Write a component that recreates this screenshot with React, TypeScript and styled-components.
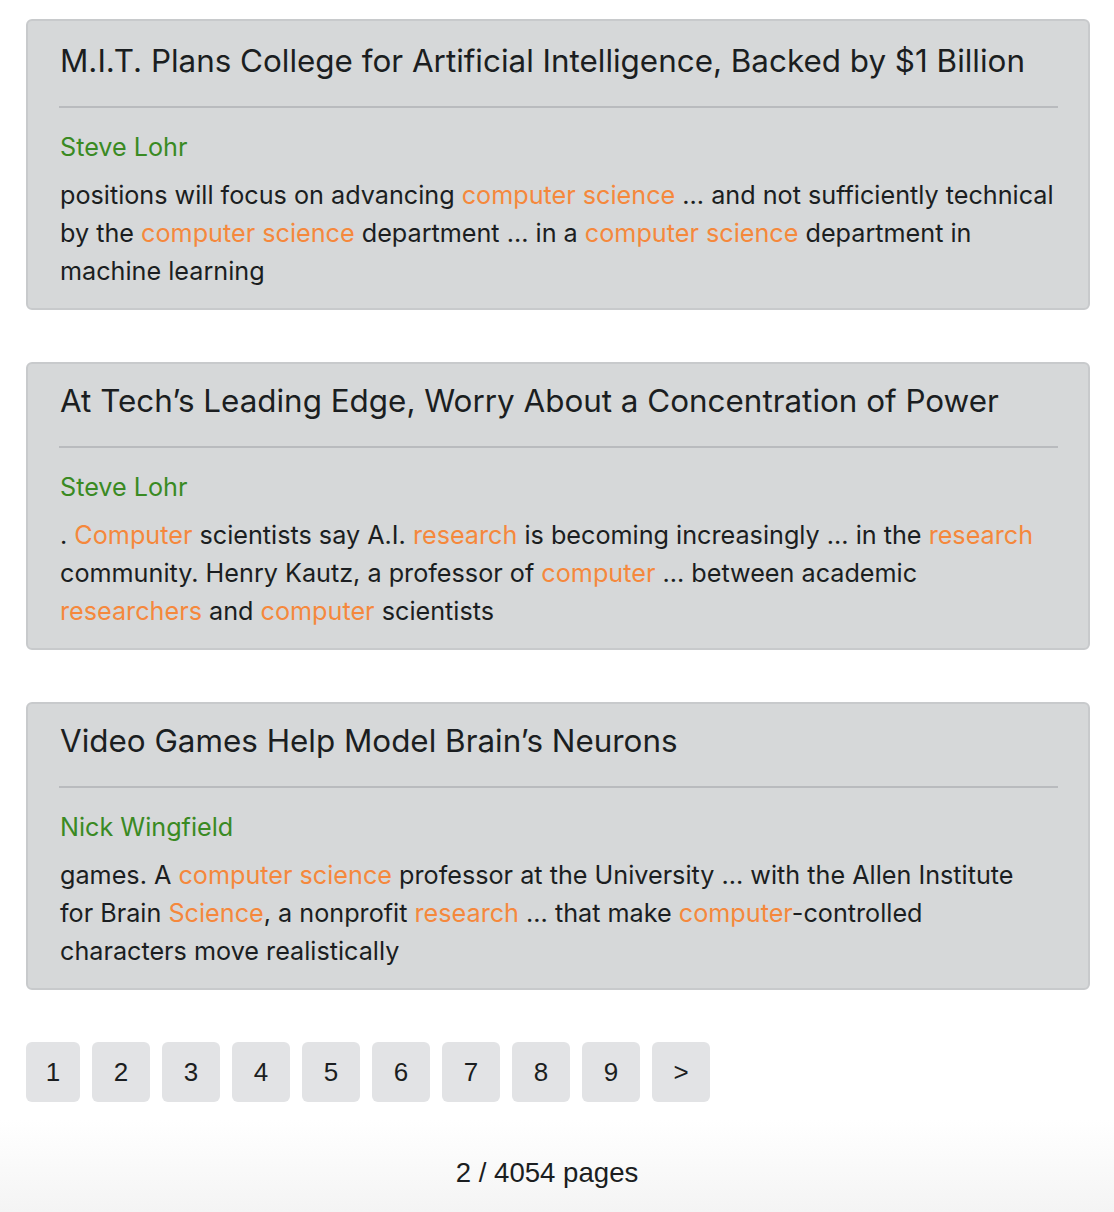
import React from "react";
import styled, { createGlobalStyle } from "styled-components";

const Global = createGlobalStyle`
  html, body { margin: 0; padding: 0; }
  body {
    min-height: 1212px;
    background: linear-gradient(to bottom, #ffffff 0px, #ffffff 1120px, #f4f4f4 1212px);
    font-family: Inter, "Liberation Sans", Arial, sans-serif;
    color: #1b1e21;
  }
`;

const Page = styled.div`
  padding: 19px 24px 0 26px;
  display: flex;
  flex-direction: column;
`;

const Card = styled.article`
  background: #d6d8d9;
  border: 2px solid #c8cacc;
  border-radius: 6px;
  padding: 18px 30px 18px 32px;
  margin-bottom: 52px;

  &:first-child {
    padding-top: 21px;
  }
`;

const Title = styled.h2`
  margin: 0;
  font-size: 31.4px;
  line-height: 38px;
  font-weight: 400;
  color: #1b1e21;
`;

const Rule = styled.hr`
  border: 0;
  border-top: 2px solid #b9bbbe;
  margin: 26px 0 20px -1px;
`;

const Author = styled.div`
  font-size: 25.2px;
  line-height: 38px;
  color: #3a8a23;
  margin-bottom: 10px;
`;

const Snippet = styled.p`
  margin: 0;
  font-size: 25.2px;
  line-height: 38px;
  color: #1b1e21;
`;

const Hit = styled.span`
  color: #f5883c;
`;

const Pager = styled.nav`
  display: flex;
  gap: 12px;
`;

const PageButton = styled.button<{ $w: number }>`
  width: ${(p) => p.$w}px;
  height: 60px;
  border: 0;
  border-radius: 6px;
  background: #e2e3e5;
  color: #1b1e21;
  font-family: "Liberation Sans", Arial, sans-serif;
  font-size: 26px;
  padding: 0;
  cursor: pointer;
`;

const PageInfo = styled.div`
  text-align: center;
  font-family: "Liberation Sans", Arial, sans-serif;
  font-size: 27.6px;
  line-height: 38px;
  margin-top: 52px;
  padding-right: 22px;
  color: #1b1e21;
`;

type Part = string | { h: string };

const articles: { title: string; author: string; parts: Part[] }[] = [
  {
    title: "M.I.T. Plans College for Artificial Intelligence, Backed by $1 Billion",
    author: "Steve Lohr",
    parts: [
      "positions will focus on advancing ",
      { h: "computer science" },
      " ... and not sufficiently technical by the ",
      { h: "computer science" },
      " department ... in a ",
      { h: "computer science" },
      " department in machine learning",
    ],
  },
  {
    title: "At Tech\u2019s Leading Edge, Worry About a Concentration of Power",
    author: "Steve Lohr",
    parts: [
      ". ",
      { h: "Computer" },
      " scientists say A.I. ",
      { h: "research" },
      " is becoming increasingly ... in the ",
      { h: "research" },
      " community. Henry Kautz, a professor of ",
      { h: "computer" },
      " ... between academic ",
      { h: "researchers" },
      " and ",
      { h: "computer" },
      " scientists",
    ],
  },
  {
    title: "Video Games Help Model Brain\u2019s Neurons",
    author: "Nick Wingfield",
    parts: [
      "games. A ",
      { h: "computer science" },
      " professor at the University ... with the Allen Institute for\u00a0Brain ",
      { h: "Science" },
      ", a nonprofit ",
      { h: "research" },
      " ... that make ",
      { h: "computer" },
      "-controlled characters\u00a0move realistically",
    ],
  },
];

const pages = ["1", "2", "3", "4", "5", "6", "7", "8", "9", ">"];

export default function App() {
  return (
    <>
      <Global />
      <Page>
        {articles.map((a, i) => (
          <Card key={i}>
            <Title>{a.title}</Title>
            <Rule />
            <Author>{a.author}</Author>
            <Snippet>
              {a.parts.map((p, j) =>
                typeof p === "string" ? (
                  <React.Fragment key={j}>{p}</React.Fragment>
                ) : (
                  <Hit key={j}>{p.h}</Hit>
                )
              )}
            </Snippet>
          </Card>
        ))}
        <Pager>
          {pages.map((p, i) => (
            <PageButton key={p} $w={i === 0 ? 54 : 58}>
              {p}
            </PageButton>
          ))}
        </Pager>
        <PageInfo>2 / 4054 pages</PageInfo>
      </Page>
    </>
  );
}
